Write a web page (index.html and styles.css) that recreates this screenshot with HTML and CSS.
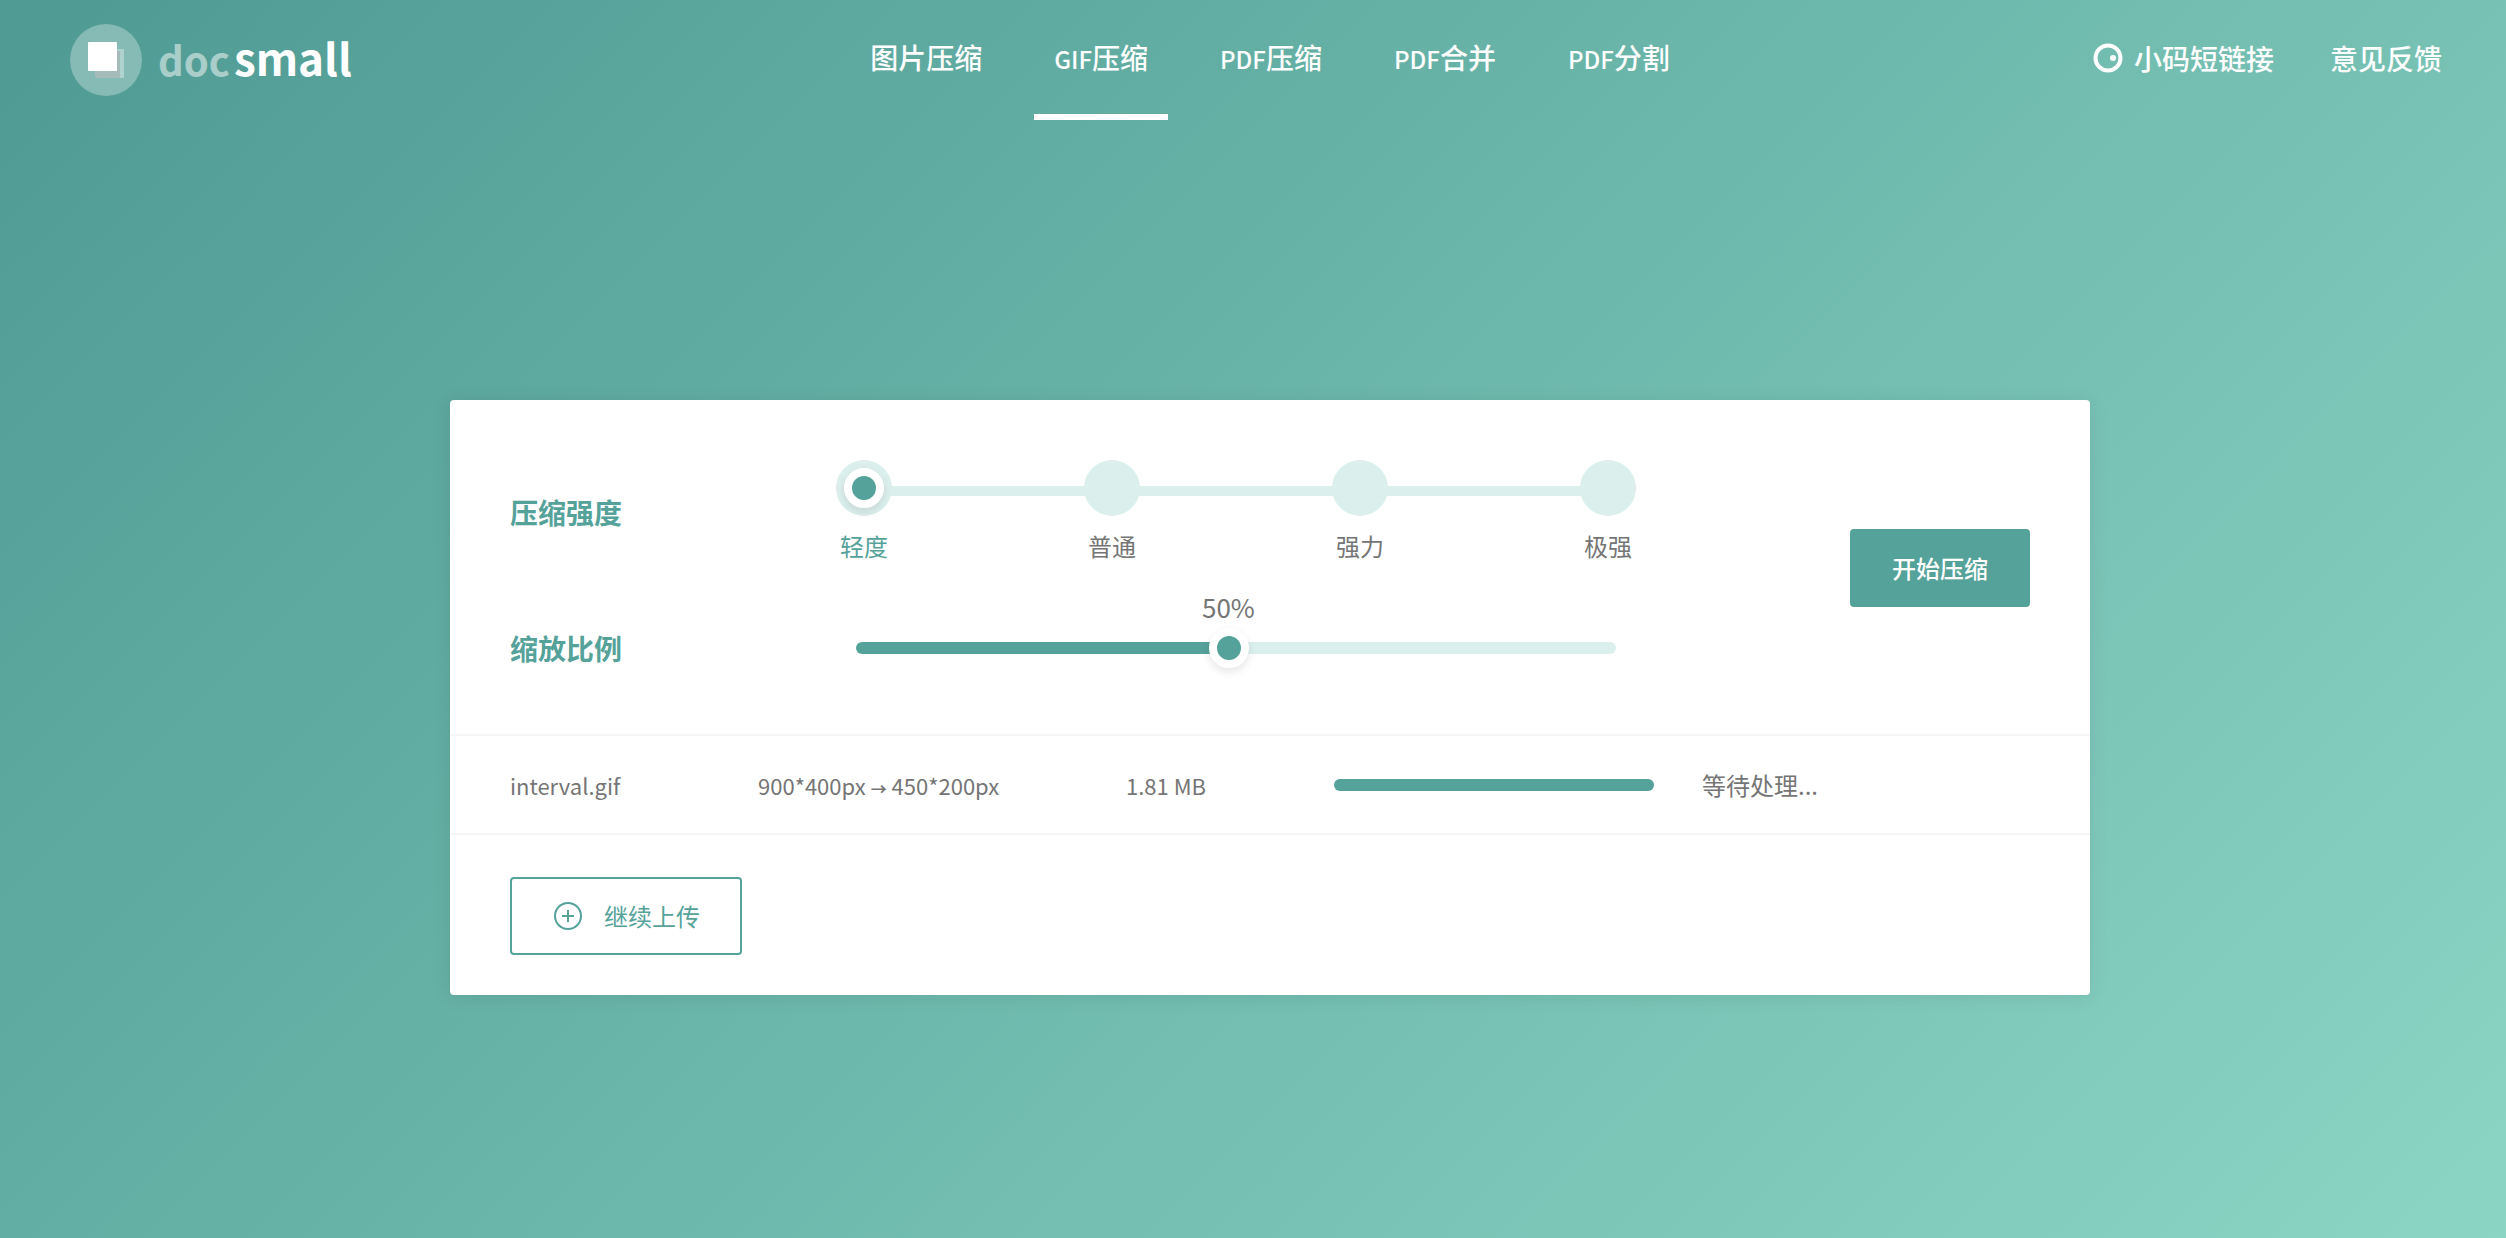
FILE: index.html
```html
<!DOCTYPE html>
<html lang="zh-CN">
<head>
<meta charset="utf-8">
<meta name="viewport" content="width=device-width, initial-scale=1">
<title>docsmall - GIF压缩</title>
<link rel="stylesheet" href="styles.css">
</head>
<body>
<header class="header">
  <a class="logo" href="#">
    <svg class="logo-mark" viewBox="0 0 72 72" aria-hidden="true">
      <circle cx="36" cy="36" r="36" fill="#fff" fill-opacity=".3"/>
      <rect x="25" y="25" width="29" height="29" rx="1" fill="#fff" fill-opacity=".35"/>
      <path d="M25 47h22V27h3v27H25z" fill="#888" fill-opacity=".3"/>
      <rect x="18" y="18" width="29" height="29" rx="1" fill="#fff"/>
    </svg>
    <span class="logo-text"><span class="logo-doc">doc</span><span class="logo-small">small</span></span>
  </a>
  <nav class="nav">
    <a class="nav-link" href="#">图片压缩</a>
    <a class="nav-link is-active" href="#" aria-current="page"><span class="latin">GIF</span>压缩</a>
    <a class="nav-link" href="#"><span class="latin">PDF</span>压缩</a>
    <a class="nav-link" href="#"><span class="latin">PDF</span>合并</a>
    <a class="nav-link" href="#"><span class="latin">PDF</span>分割</a>
  </nav>
  <div class="side">
    <a class="side-link" href="#">
      <svg class="side-icon" viewBox="0 0 30 30" aria-hidden="true">
        <circle cx="15" cy="15" r="12.5" fill="none" stroke="#fff" stroke-width="4"/>
        <circle cx="20" cy="15" r="3" fill="#fff"/>
      </svg>
      小码短链接</a>
    <a class="side-link" href="#">意见反馈</a>
  </div>
</header>
<main class="main">
  <section class="card">
    <div class="panel">
      <div class="options">
        <h2 class="option-title" id="level-title">压缩强度</h2>
        <div class="steps" role="radiogroup" aria-labelledby="level-title">
          <label class="step"><input class="step-dot" type="radio" name="level" checked><span class="step-name">轻度</span></label>
          <label class="step"><input class="step-dot" type="radio" name="level"><span class="step-name">普通</span></label>
          <label class="step"><input class="step-dot" type="radio" name="level"><span class="step-name">强力</span></label>
          <label class="step"><input class="step-dot" type="radio" name="level"><span class="step-name">极强</span></label>
        </div>
        <label class="option-title" for="scale">缩放比例</label>
        <div class="scale">
          <output class="scale-value" for="scale">50%</output>
          <input class="scale-range" id="scale" type="range" min="2" max="100" value="50">
        </div>
      </div>
      <button class="button button-solid" type="button">开始压缩</button>
    </div>
    <table class="files">
      <colgroup><col class="col-name"><col class="col-size"><col class="col-weight"><col class="col-progress"><col></colgroup>
      <tbody>
        <tr>
          <td>interval.gif</td>
          <td>900*400px <span class="arrow">→</span> 450*200px</td>
          <td>1.81 MB</td>
          <td><progress class="progress" max="100" value="100" aria-label="interval.gif"></progress></td>
          <td class="status">等待处理...</td>
        </tr>
      </tbody>
    </table>
    <div class="footer">
      <button class="button button-outline" type="button">
        <svg class="button-icon" viewBox="0 0 32 32" fill="none" stroke="currentColor" stroke-width="2" aria-hidden="true">
          <circle cx="16" cy="16" r="13"/>
          <path d="M10 16h12M16 10v12"/>
        </svg>
        继续上传
      </button>
    </div>
  </section>
</main>
</body>
</html>
```

FILE: styles.css
```css
:root {
  --brand: #55a29a;
  --brand-pale: #dbefed;
  --text: #757575;
  --line: #f6f6f6;
}

*,
*::before {
  box-sizing: border-box;
}

body {
  margin: 0;
  min-height: 100vh;
  background: linear-gradient(135deg, #4f9a93, #8bd5c5);
  color: var(--text);
  font-family: "Noto Sans CJK SC", "Noto Sans", sans-serif;
  font-size: 24px;
  line-height: 36px;
}

a {
  color: inherit;
  text-decoration: none;
}

.header {
  display: grid;
  grid-template-columns: 1fr auto 1fr;
  grid-template-rows: 120px;
  align-items: center;
  padding: 0 64px 0 98px;
  color: #fff;
  font-size: 28px;
  font-weight: 500;
}

.logo {
  display: flex;
  align-items: center;
  gap: 16px;
  margin-left: -28px;
}

.logo-mark {
  width: 72px;
  height: 72px;
}

.logo-text {
  display: flex;
  align-items: baseline;
  gap: 4px;
  padding-bottom: 4px;
  font-weight: 700;
  line-height: 60px;
}

.logo-doc {
  font-size: 40px;
  opacity: .5;
}

.logo-small {
  font-size: 44px;
}

.nav {
  display: flex;
  gap: 32px;
  height: 100%;
}

.nav-link {
  padding: 0 20px;
  border-bottom: 6px solid transparent;
  line-height: 114px;
}

.nav-link.is-active {
  border-color: #fff;
}

.latin {
  font-size: 24px;
  line-height: 1;
}

.side {
  display: flex;
  justify-content: flex-end;
  gap: 56px;
  padding-bottom: 4px;
}

.side-link {
  display: flex;
  align-items: center;
  gap: 11px;
  line-height: 40px;
}

.side-icon {
  width: 30px;
  height: 30px;
}

.main {
  padding: 280px 0 0 34px;
}

.card {
  max-width: 1640px;
  margin: 0 auto;
  background: #fff;
  border-radius: 4px;
  box-shadow: 0 2px 20px rgba(0, 0, 0, .08);
}

.panel {
  display: flex;
  align-items: center;
  justify-content: space-between;
  padding: 60px 60px 58px;
  border-bottom: 2px solid var(--line);
}

.options {
  display: grid;
  grid-template-columns: 326px 800px;
  row-gap: 56px;
  align-items: center;
}

.option-title {
  margin: 0;
  color: var(--brand);
  font-size: 28px;
  font-weight: 700;
}

.steps {
  display: flex;
  justify-content: space-between;
  background: linear-gradient(var(--brand-pale), var(--brand-pale)) 28px 26px / calc(100% - 56px) 10px no-repeat;
}

.step {
  display: flex;
  flex-direction: column;
  align-items: center;
  gap: 12px;
  width: 56px;
}

.step-dot {
  appearance: none;
  display: grid;
  place-items: center;
  width: 56px;
  height: 56px;
  margin: 0;
  border-radius: 50%;
  background: var(--brand-pale);
}

.step-dot:checked::before {
  content: "";
  width: 40px;
  height: 40px;
  border: 8px solid #fff;
  border-radius: 50%;
  background: var(--brand);
  box-shadow: 0 4px 8px rgba(0, 0, 0, .1);
}

.step-dot:checked + .step-name {
  color: var(--brand);
}

.scale {
  position: relative;
  display: flex;
  align-items: center;
  height: 56px;
  margin: 0 20px;
}

.scale-value {
  position: absolute;
  bottom: 51px;
  left: 49%;
  transform: translateX(-50%);
  font-size: 26px;
}

.scale-range {
  appearance: none;
  width: 100%;
  height: 40px;
  margin: 0;
  background: none;
}

.scale-range::-webkit-slider-runnable-track {
  height: 12px;
  border-radius: 6px;
  background: linear-gradient(to right, var(--brand) 49%, var(--brand-pale) 49%);
}

.scale-range::-webkit-slider-thumb {
  appearance: none;
  width: 40px;
  height: 40px;
  margin-top: -14px;
  border: 8px solid #fff;
  border-radius: 50%;
  background: var(--brand);
  box-shadow: 0 4px 8px rgba(0, 0, 0, .1);
}

.button {
  display: flex;
  align-items: center;
  justify-content: center;
  gap: 20px;
  height: 78px;
  padding: 0 40px;
  border: 2px solid var(--brand);
  border-radius: 4px;
  font: inherit;
}

.button-solid {
  background: var(--brand);
  color: #fff;
  font-weight: 500;
}

.button-outline {
  background: #fff;
  color: var(--brand);
}

.button-icon {
  width: 32px;
  height: 32px;
}

.files {
  width: 100%;
  table-layout: fixed;
  border-collapse: collapse;
  font-size: 22px;
}

.files tr {
  height: 98px;
  border-bottom: 2px solid var(--line);
}

.files td {
  padding: 0;
  vertical-align: middle;
}

.files td:first-child {
  padding-left: 60px;
}

.files .status {
  font-size: 24px;
}

.arrow {
  font-size: 16px;
  font-weight: 700;
  line-height: 1;
}

.col-name {
  width: 308px;
}

.col-size,
.col-progress {
  width: 368px;
}

.col-weight {
  width: 208px;
}

.progress {
  appearance: none;
  display: block;
  width: 320px;
  height: 12px;
  border: 0;
}

.progress::-webkit-progress-bar {
  border-radius: 6px;
  background: var(--brand-pale);
}

.progress::-webkit-progress-value {
  border-radius: 6px;
  background: var(--brand);
}

.footer {
  padding: 42px 60px 40px;
}
```
